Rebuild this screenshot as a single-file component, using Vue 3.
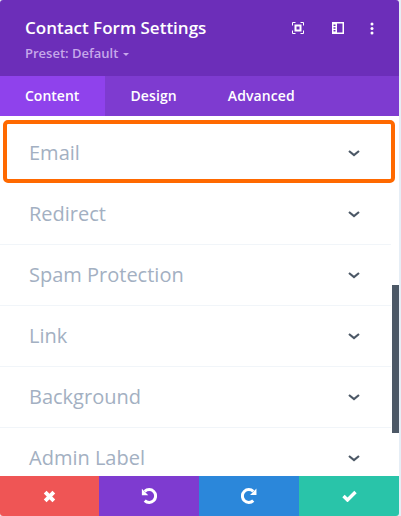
<template>
	<div class="modal">
		<header class="modal-header">
			<div class="titles">
				<h1 class="title">Contact Form Settings</h1>
				<div class="preset">Preset: Default <span class="caret"></span></div>
			</div>
			<div class="header-icons">
				<svg class="icon-screen" width="12" height="12" viewBox="0 0 12 12" fill="none" stroke="#fff">
					<path d="M.5 3.5v-3h3M8.500 .5h3v3M11.500 8.500v3h-3M3.500 11.500h-3v-3" />
					<rect x="3.500" y="3.500" width="5" height="5" stroke-width="2" />
				</svg>
				<svg width="12" height="12" viewBox="0 0 12 12">
					<path fill="#fff" fill-rule="evenodd" d="M0 0h12v12H0zM5 1.500v9h5.500v-9zM1.500 2.500v1.500H3.500V2.500zM1.500 5.300v1.400H3.500V5.300zM1.500 8v1.500H3.500V8z" />
				</svg>
				<svg width="4" height="13" viewBox="0 0 4 13" fill="#fff">
					<circle cx="2" cy="2" r="1.500" />
					<circle cx="2" cy="6.500" r="1.500" />
					<circle cx="2" cy="11" r="1.500" />
				</svg>
			</div>
		</header>

		<nav class="tabs">
			<div
				v-for="tab in tabs"
				:key="tab"
				class="tab"
				:class="{ active: tab === 'Content' }"
			>
				{{ tab }}
			</div>
		</nav>

		<div class="list">
			<div v-for="(item, i) in items" :key="item" class="row" :class="{ highlighted: i === 0 }">
				<span class="label">{{ item }}</span>
				<svg class="chevron" width="12" height="8" viewBox="0 0 12 8" fill="none" stroke="#4c5866" stroke-width="2.200">
					<path d="M1 2l5 4 5-4" />
				</svg>
			</div>
			<div class="scrollbar"></div>
		</div>

		<footer class="actions">
			<div class="action cancel">
				<svg width="13" height="13" viewBox="0 0 12 12" stroke="#fff" stroke-width="3.600">
					<path d="M2 2l8 8M10 2l-8 8" />
				</svg>
			</div>
			<div class="action undo">
				<svg width="16" height="16" viewBox="0 0 15 15" fill="none" stroke="#fff" stroke-width="2.800">
					<path d="M3.500 3.200A6 6 0 1 1 3.500 11.800" />
					<path d="M.8 .8v6h6z" fill="#fff" stroke="none" />
				</svg>
			</div>
			<div class="action redo">
				<svg width="16" height="16" viewBox="0 0 15 15" fill="none" stroke="#fff" stroke-width="2.800">
					<path d="M11.500 3.200A6 6 0 1 0 11.500 11.800" />
					<path d="M14.500 .5v6h-6z" fill="#fff" stroke="none" />
				</svg>
			</div>
			<div class="action save">
				<svg width="15" height="12" viewBox="0 0 15 12" fill="none" stroke="#fff" stroke-width="3.400">
					<path d="M1.500 6l4 4 8-8" />
				</svg>
			</div>
		</footer>
	</div>
</template>

<script setup>
const tabs = ['Content', 'Design', 'Advanced'];
const items = ['Email', 'Redirect', 'Spam Protection', 'Link', 'Background', 'Admin Label'];
</script>

<style>
html,
body {
	margin: 0;
	background: #e6eef6;
}
</style>

<style scoped>
.modal {
	position: relative;
	display: flex;
	flex-direction: column;
	width: 399px;
	height: 516px;
	overflow: hidden;
	background: #fff;
	border-radius: 3px;
	font-family: "Open Sans", sans-serif;
}

.modal-header {
	display: flex;
	justify-content: space-between;
	height: 76px;
	flex: none;
	box-sizing: border-box;
	padding: 17px 25px 0;
	background: #6c2eb9;
	color: #fff;
}

.title {
	margin: 0;
	font-size: 17px;
	line-height: 22px;
	font-weight: 600;
}

.preset {
	margin-top: 6px;
	font-size: 13px;
	line-height: 16px;
	font-weight: 600;
	color: #c6a8ea;
}

.caret {
	display: inline-block;
	margin-left: 1px;
	vertical-align: 2px;
	border: 3px solid transparent;
	border-top: 3px solid #c6a8ea;
	border-bottom: 0;
}

.header-icons {
	display: flex;
	align-items: center;
	gap: 26px;
	height: 22px;
}

.icon-screen {
	margin-right: 2px;
}

.tabs {
	display: flex;
	height: 40px;
	flex: none;
	background: #7e3bd0;
}

.tab {
	padding: 0 25.500px;
	font-size: 14px;
	line-height: 40px;
	font-weight: 600;
	letter-spacing: .1px;
	color: #fff;
}

.tab.active {
	padding: 0 25px;
	width: 55px;
	letter-spacing: 0;
	background: #8f42ec;
}

.list {
	position: relative;
	flex: 1;
	padding-top: 7px;
	overflow: hidden;
}

.row {
	display: flex;
	align-items: center;
	justify-content: space-between;
	height: 60px;
	margin-right: 8px;
	padding: 0 31px 0 29px;
	border-bottom: 1px solid #f1f5f9;
}

.row.highlighted {
	position: relative;
	border-bottom-color: transparent;
}

.row.highlighted::after {
	content: "";
	position: absolute;
	left: 3px;
	right: -4px;
	top: -3px;
	bottom: 0;
	box-sizing: border-box;
	border: 4px solid #ff6900;
	border-radius: 5px;
}

.label {
	padding-bottom: 2px;
	font-size: 20px;
	color: #a3b0c2;
}

.chevron {
	flex: none;
}

.scrollbar {
	position: absolute;
	right: 0;
	top: 169px;
	width: 7px;
	height: 148px;
	background: #4c5866;
}

.actions {
	display: flex;
	height: 40px;
	flex: none;
}

.action {
	display: flex;
	width: 100px;
	align-items: center;
	justify-content: center;
}

.cancel {
	width: 99px;
	background: #ef5555;
}

.undo {
	background: #7e3bd0;
}

.redo {
	background: #2b87da;
}

.save {
	background: #29c4a9;
}
</style>
